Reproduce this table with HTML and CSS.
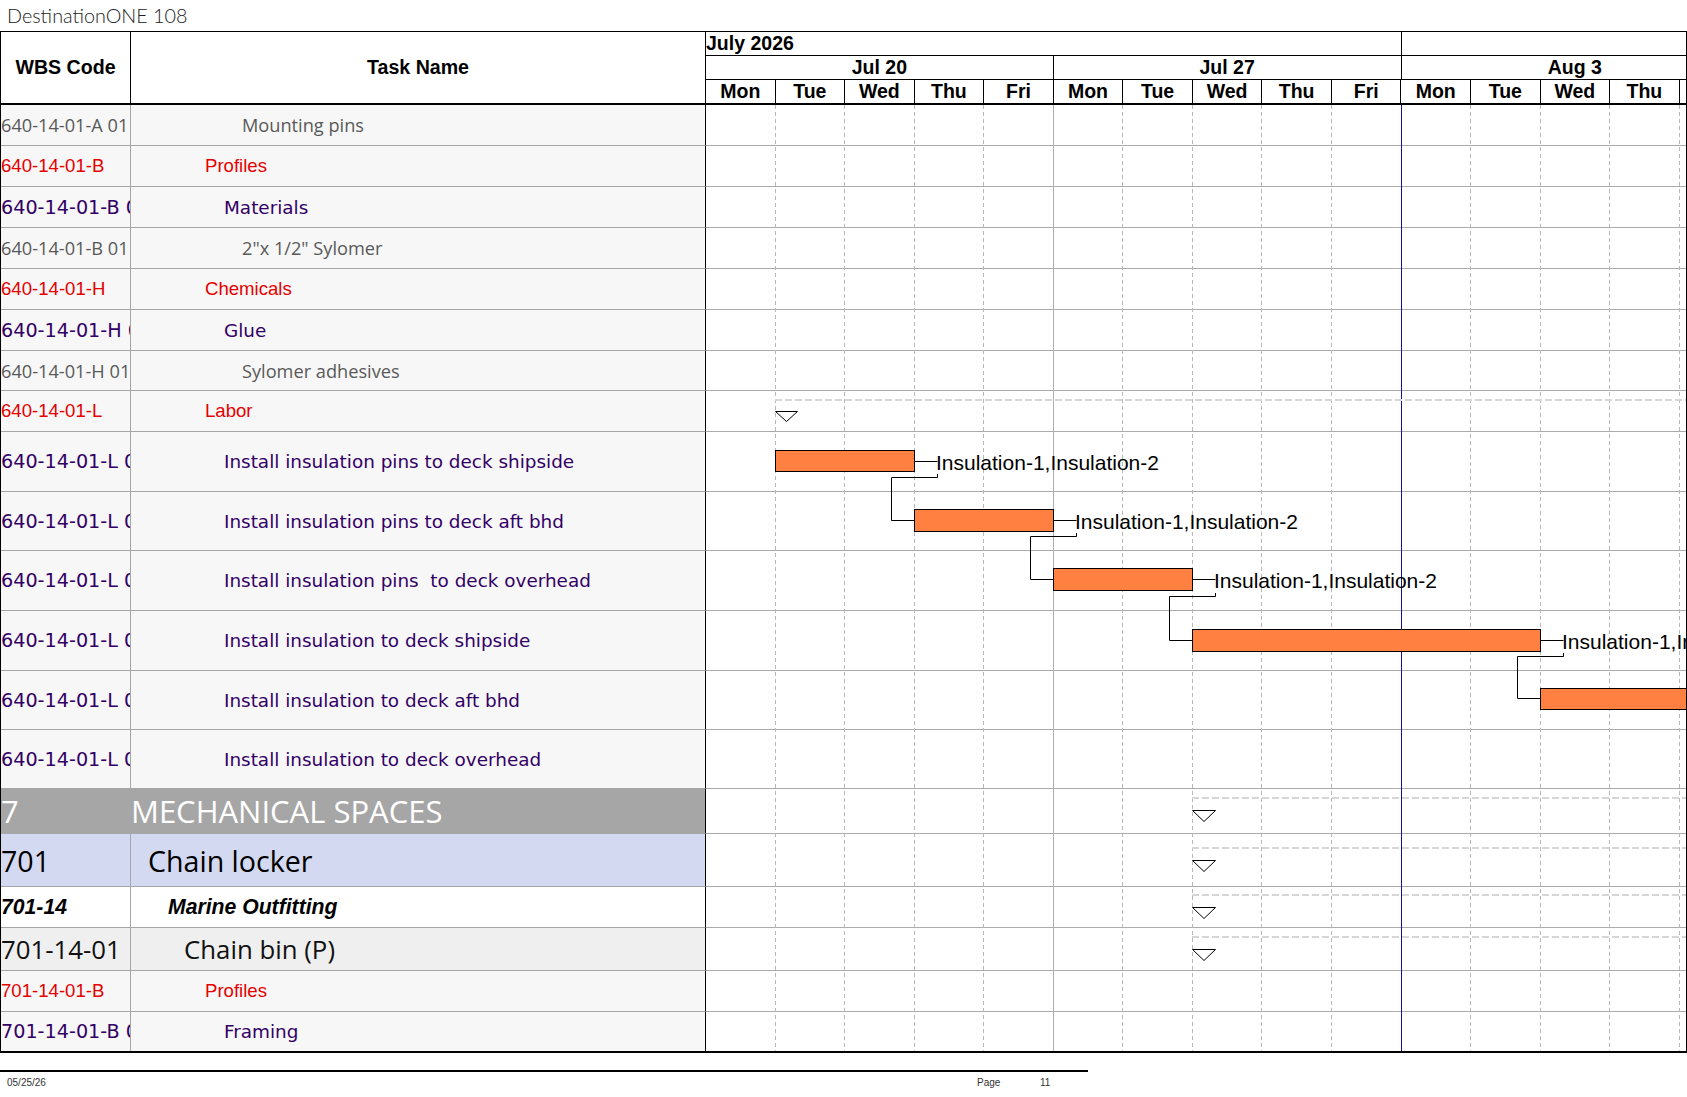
FILE: index.html
```html
<!DOCTYPE html>
<html lang="en">
<head>
<meta charset="utf-8">
<title>DestinationONE 108</title>
<link rel="stylesheet" href="styles.css">
</head>
<body>
<div class="title">DestinationONE 108</div>
<div class="sheet">
  <div class="h-wbs">WBS Code</div>
  <div class="h-name">Task Name</div>
  <div class="gantt-head">
    <div class="g-month"><div class="m1">July 2026</div><div class="m2"></div></div>
    <div class="g-week"><div class="wk">Jul 20</div><div class="wk">Jul 27</div><div class="wk">Aug 3</div></div>
    <div class="g-day">
      <div class="day">Mon</div><div class="day">Tue</div><div class="day">Wed</div><div class="day">Thu</div><div class="day">Fri</div>
      <div class="day">Mon</div><div class="day">Tue</div><div class="day">Wed</div><div class="day">Thu</div><div class="day">Fri</div>
      <div class="day">Mon</div><div class="day">Tue</div><div class="day">Wed</div><div class="day">Thu</div><div class="day">Fri</div>
    </div>
  </div>

  <svg class="chart" viewBox="706 105 980 946" width="980" height="946" xmlns="http://www.w3.org/2000/svg">
    <path class="hl" d="M706 145.5H1686M706 186.5H1686M706 227.5H1686M706 268.5H1686M706 309.5H1686M706 350.5H1686M706 390.5H1686M706 431.5H1686M706 491.5H1686M706 550.5H1686M706 610.5H1686M706 670.5H1686M706 729.5H1686M706 788.5H1686M706 833.5H1686M706 886.5H1686M706 927.5H1686M706 970.5H1686M706 1011.5H1686"/>
    <path class="vl" d="M775.5 105V1051M844.5 105V1051M914.5 105V1051M983.5 105V1051M1122.5 105V1051M1192.5 105V1051M1261.5 105V1051M1331.5 105V1051M1470.5 105V1051M1540.5 105V1051M1609.5 105V1051M1679.5 105V1051"/>
    <path class="wl" d="M1053.5 105V1051"/>
    <path class="today" d="M1401.5 105V1051"/>
    <path class="sum" d="M775 400H1686M1192 798H1686M1192 848H1686M1192 895H1686M1192 937H1686"/>

    <rect class="bar" x="775.5" y="450.5" width="139" height="21"/>
    <rect class="bar" x="914.5" y="509.5" width="139" height="22"/>
    <rect class="bar" x="1053.5" y="568.5" width="139" height="22"/>
    <rect class="bar" x="1192.5" y="629.5" width="348" height="22"/>
    <rect class="bar" x="1540.5" y="688.5" width="200" height="21"/>

    <path class="ln" d="M914.5 461.5H937.5M1053.5 520.5H1076.5M1192.5 579.5H1215.5M1540.5 640.5H1563.5"/>
    <path class="ln" d="M937.5 474V477.5H891.5V520.5H914.5"/>
    <path class="ln" d="M1076.5 533V536.5H1030.5V579.5H1053.5"/>
    <path class="ln" d="M1215.5 593V596.5H1169.5V640.5H1192.5"/>
    <path class="ln" d="M1563.5 653V656.5H1517.5V698.5H1540.5"/>

    <text class="lbl" x="936" y="469.5">Insulation-1,Insulation-2</text>
    <text class="lbl" x="1075" y="528.5">Insulation-1,Insulation-2</text>
    <text class="lbl" x="1214" y="587.5">Insulation-1,Insulation-2</text>
    <text class="lbl" x="1562" y="648.5">Insulation-1,Insulation-2</text>

    <polygon class="tri" points="775.5,411.5 797.5,411.5 786.5,421.5"/>
    <polygon class="tri" points="1192.5,810.5 1215.5,810.5 1204,821.5"/>
    <polygon class="tri" points="1192.5,860.5 1215.5,860.5 1204,871.5"/>
    <polygon class="tri" points="1192.5,907.5 1215.5,907.5 1204,918.5"/>
    <polygon class="tri" points="1192.5,949.5 1215.5,949.5 1204,960.5"/>
  </svg>

  <div class="wbs grey">640-14-01-A 01 01</div><div class="name grey lv3">Mounting pins</div>
  <div class="wbs red">640-14-01-B</div><div class="name red lv1">Profiles</div>
  <div class="wbs ind">640-14-01-B 01</div><div class="name ind lv2">Materials</div>
  <div class="wbs grey">640-14-01-B 01 01</div><div class="name grey lv3">2"x 1/2" Sylomer</div>
  <div class="wbs red">640-14-01-H</div><div class="name red lv1">Chemicals</div>
  <div class="wbs ind">640-14-01-H 01</div><div class="name ind lv2">Glue</div>
  <div class="wbs grey">640-14-01-H 01 01</div><div class="name grey lv3">Sylomer adhesives</div>
  <div class="wbs red">640-14-01-L</div><div class="name red lv1">Labor</div>
  <div class="wbs ind">640-14-01-L 01</div><div class="name ind lv2">Install insulation pins to deck shipside</div>
  <div class="wbs ind">640-14-01-L 02</div><div class="name ind lv2">Install insulation pins to deck aft bhd</div>
  <div class="wbs ind">640-14-01-L 03</div><div class="name ind lv2">Install insulation pins &nbsp;to deck overhead</div>
  <div class="wbs ind">640-14-01-L 04</div><div class="name ind lv2">Install insulation to deck shipside</div>
  <div class="wbs ind">640-14-01-L 05</div><div class="name ind lv2">Install insulation to deck aft bhd</div>
  <div class="wbs ind">640-14-01-L 06</div><div class="name ind lv2">Install insulation to deck overhead</div>
  <div class="wbs mech">7</div><div class="name mech">MECHANICAL SPACES</div>
  <div class="wbs chain">701</div><div class="name chain">Chain locker</div>
  <div class="wbs marine">701-14</div><div class="name marine">Marine Outfitting</div>
  <div class="wbs bin">701-14-01</div><div class="name bin">Chain bin (P)</div>
  <div class="wbs red">701-14-01-B</div><div class="name red lv1">Profiles</div>
  <div class="wbs ind last">701-14-01-B 01</div><div class="name ind lv2 last">Framing</div>
</div>
<div class="footer">
  <span class="f-date">05/25/26</span>
  <span class="f-page">Page</span>
  <span class="f-num">11</span>
</div>
</body>
</html>
```

FILE: styles.css
```css
* { box-sizing: border-box; }
html, body { margin: 0; padding: 0; background: #fff; }
body {
  width: 1687px;
  height: 1097px;
  overflow: hidden;
  font-family: "Liberation Sans", Arial, sans-serif;
  color: #000;
}

.title {
  height: 31px;
  padding: 4px 0 0 7px;
  font-family: "Lato", "Open Sans", sans-serif;
  font-weight: 300;
  font-size: 19.8px;
  line-height: 22px;
  color: #222;
}

.sheet {
  width: 1687px;
  display: grid;
  grid-template-columns: 130px 575px 980px;
  grid-template-rows: 73px 41px 41px 41px 41px 41px 41px 40px 41px 60px 59px 60px 60px 59px 59px 45px 53px 41px 43px 41px 39px;
  border: 1px solid #000;
  border-bottom-width: 2px;
}

/* header */
.h-wbs, .h-name {
  display: flex;
  align-items: center;
  justify-content: center;
  font-family: "Liberation Sans", Arial, sans-serif;
  font-weight: bold;
  font-size: 19.6px;
  border-right: 1px solid #000;
  border-bottom: 2px solid #000;
  background: #fff;
}
.h-wbs { grid-column: 1; grid-row: 1; }
.h-name { grid-column: 2; grid-row: 1; }

.gantt-head {
  grid-column: 3;
  grid-row: 1;
  display: flex;
  flex-direction: column;
  overflow: hidden;
  border-bottom: 2px solid #000;
  font-family: "Liberation Sans", Arial, sans-serif;
  font-weight: bold;
  font-size: 19.5px;
  white-space: nowrap;
}
.g-month, .g-week {
  height: 24px;
  display: flex;
  border-bottom: 1px solid #000;
  line-height: 23px;
}
.g-day {
  height: 23px;
  display: flex;
  line-height: 23px;
}
.m1 {
  flex: none;
  width: 695.5px;
  border-right: 1px solid #000;
  line-height: 22px;
}
.m2 { flex: 1; }
.wk {
  flex: none;
  width: 347.75px;
  border-right: 1px solid #000;
  text-align: center;
}
.day {
  flex: none;
  width: 69.55px;
  border-right: 1px solid #000;
  text-align: center;
}

/* chart */
.chart {
  grid-column: 3;
  grid-row: 2 / span 20;
  display: block;
  width: 980px;
  height: 946px;
  background: #fff;
}
.hl { stroke: #ababab; stroke-width: 1; fill: none; }
.vl { stroke: #b8b8b8; stroke-width: 1; stroke-dasharray: 4 3; fill: none; }
.wl { stroke: #b0b0b0; stroke-width: 1; fill: none; }
.today { stroke: #10109a; stroke-width: 1; fill: none; }
.sum { stroke: #d6d6d6; stroke-width: 2; stroke-dasharray: 7 3; fill: none; }
.bar { fill: #ff8040; stroke: #000; stroke-width: 1; }
.ln { stroke: #000; stroke-width: 1; fill: none; }
.tri { fill: #fff; stroke: #000; stroke-width: 1; }
.lbl {
  font-family: "Liberation Sans", Arial, sans-serif;
  font-size: 21px;
  fill: #000;
}

/* table rows */
.wbs, .name {
  display: flex;
  align-items: center;
  white-space: pre;
  overflow: hidden;
  background: #f7f7f7;
  border-bottom: 1px solid #a6a6a6;
}
.wbs {
  grid-column: 1;
  border-right: 1px solid #a6a6a6;
}
.name {
  grid-column: 2;
  border-right: 1px solid #000;
}
.last { border-bottom: none; }

.grey {
  font-family: "Open Sans", sans-serif;
  font-size: 18.2px;
  color: #595959;
}
.red {
  font-family: "Liberation Sans", Arial, sans-serif;
  font-size: 18.6px;
  color: #e60000;
}
.ind {
  font-family: "DejaVu Sans", Verdana, sans-serif;
  font-size: 18.4px;
  color: #330066;
}
.wbs.ind { font-size: 19.2px; }
.lv1 { padding-left: 74px; }
.lv2 { padding-left: 93px; }
.lv3 { padding-left: 111px; }

.mech {
  background: #a6a6a6;
  font-family: "Open Sans", sans-serif;
  font-size: 31px;
  color: #fff;
  border-bottom-color: #a6a6a6;
}
.wbs.mech { border-right-color: #a6a6a6; }
.name.mech { padding-left: 0; }

.chain {
  background: #d3d9f0;
  font-family: "Open Sans", sans-serif;
  font-size: 28.6px;
  color: #000;
}
.name.chain { padding-left: 17px; }

.marine {
  background: #fff;
  font-family: "Liberation Sans", Arial, sans-serif;
  font-weight: bold;
  font-style: italic;
  font-size: 21.2px;
  color: #000;
}
.name.marine { padding-left: 37px; }

.bin {
  background: #efefef;
  font-family: "Open Sans", sans-serif;
  font-size: 25.8px;
  color: #111;
}
.name.bin { padding-left: 53px; }

/* footer */
.footer {
  width: 1088px;
  margin-top: 17px;
  border-top: 2px solid #000;
  padding-top: 5px;
  display: grid;
  grid-template-columns: 977px 63px auto;
  font-family: "Liberation Sans", Arial, sans-serif;
  font-size: 10px;
  line-height: 12px;
  color: #333;
}
.f-date { padding-left: 7px; }
```
